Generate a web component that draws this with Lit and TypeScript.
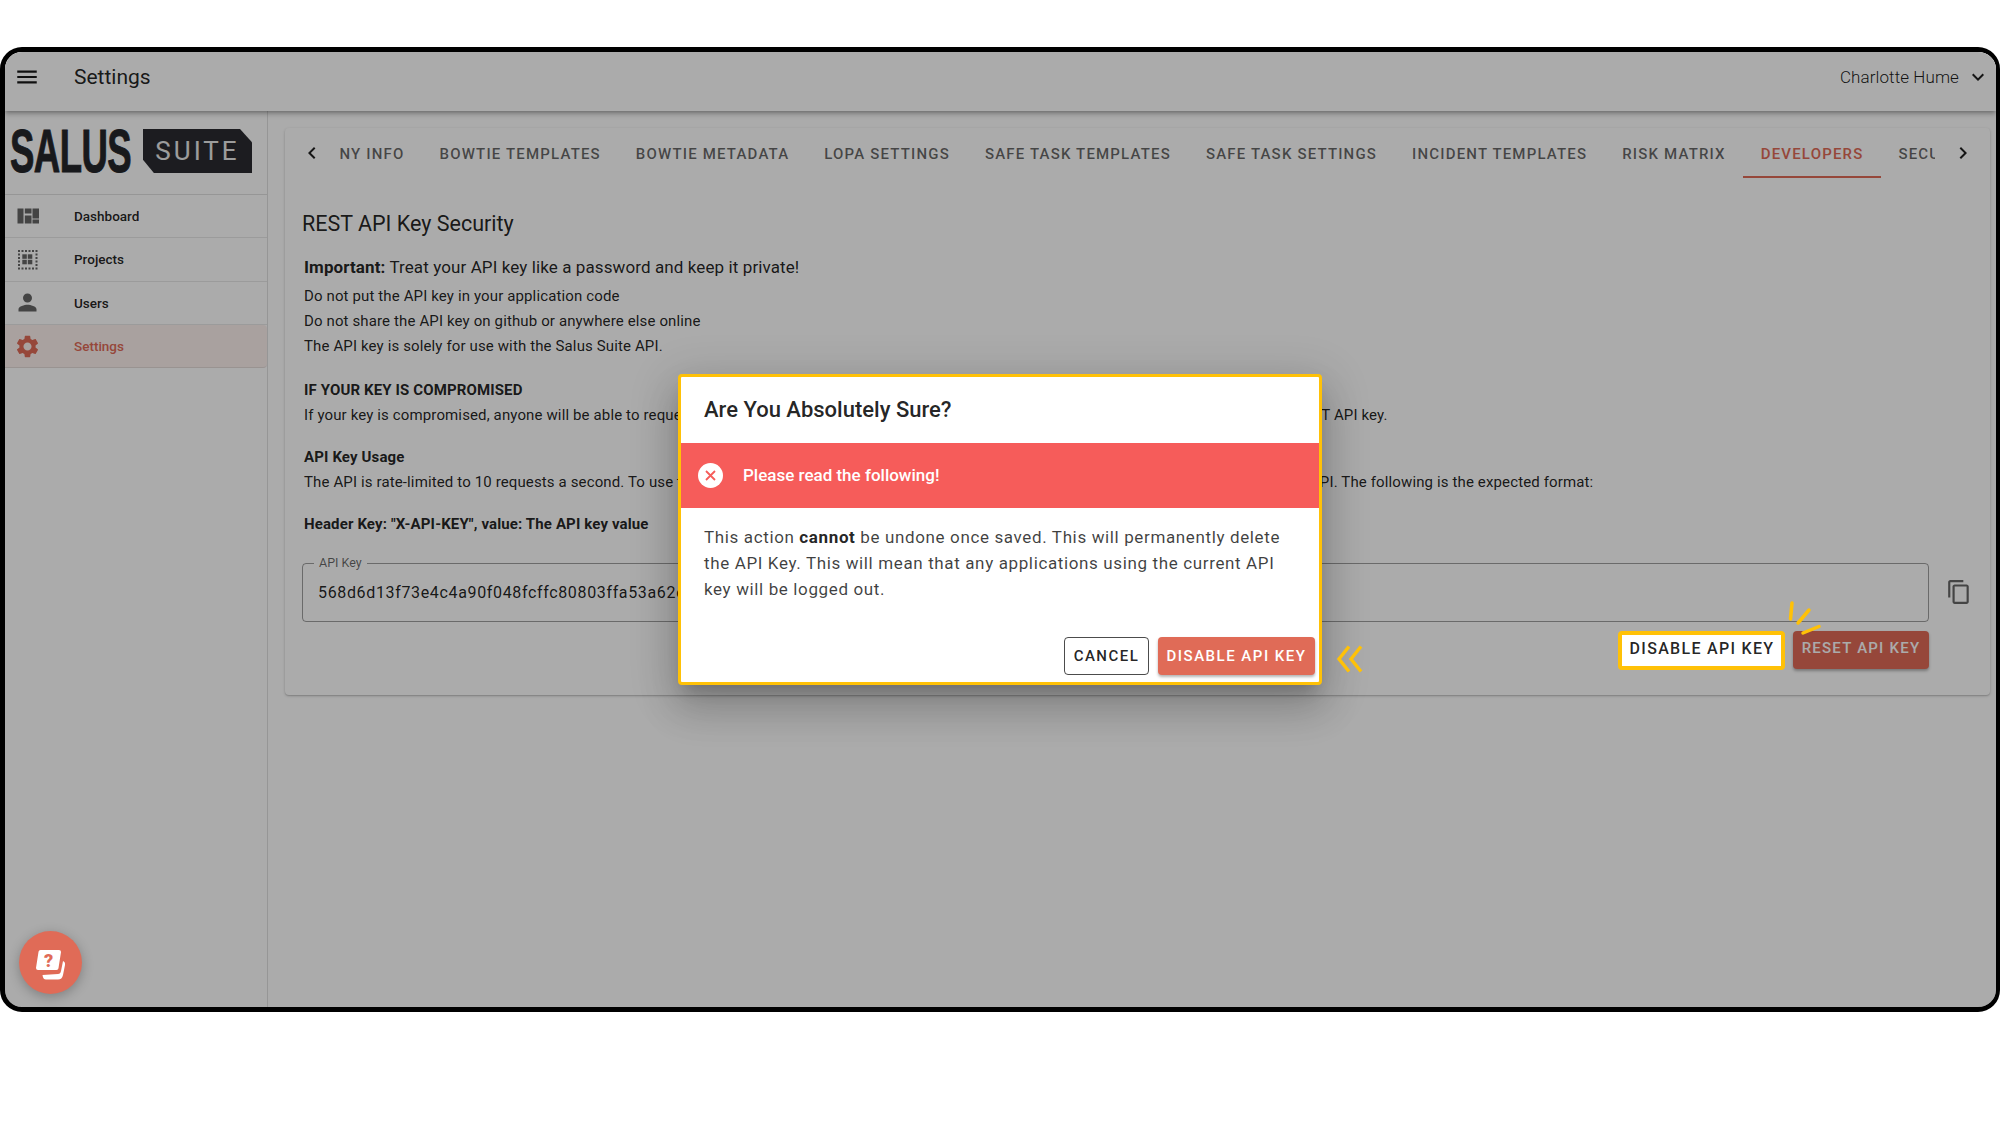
import { LitElement, html, css, svg } from "lit";
import { customElement } from "lit/decorators.js";

const P = {
  menu: "M3 18h18v-2H3v2zm0-5h18v-2H3v2zm0-7v2h18V6H3z",
  person: "M12 12c2.21 0 4-1.79 4-4s-1.79-4-4-4-4 1.79-4 4 1.79 4 4 4zm0 2c-2.67 0-8 1.34-8 4v2h16v-2c0-2.66-5.33-4-8-4z",
  gear: "M19.14 12.94c.04-.3.06-.61.06-.94 0-.32-.02-.64-.07-.94l2.03-1.58c.18-.14.23-.41.12-.61l-1.92-3.32c-.12-.22-.37-.29-.59-.22l-2.39.96c-.5-.38-1.03-.7-1.62-.94l-.36-2.54c-.04-.24-.24-.41-.48-.41h-3.84c-.24 0-.43.17-.47.41l-.36 2.54c-.59.24-1.13.57-1.62.94l-2.39-.96c-.22-.08-.47 0-.59.22L2.74 8.87c-.12.21-.08.47.12.61l2.03 1.58c-.05.3-.09.63-.09.94s.02.64.07.94l-2.03 1.58c-.18.14-.23.41-.12.61l1.92 3.32c.12.22.37.29.59.22l2.39-.96c.5.38 1.03.7 1.62.94l.36 2.54c.05.24.24.41.48.41h3.84c.24 0 .44-.17.47-.41l.36-2.54c.59-.24 1.13-.56 1.62-.94l2.39.96c.22.08.47 0 .59-.22l1.92-3.32c.12-.22.07-.47-.12-.61l-2.01-1.58zM12 15.6c-1.98 0-3.6-1.62-3.6-3.6s1.62-3.6 3.6-3.6 3.6 1.62 3.6 3.6-1.62 3.6-3.6 3.6z",
  copy: "M16 1H4c-1.1 0-2 .9-2 2v14h2V3h12V1zm3 4H8c-1.1 0-2 .9-2 2v14c0 1.1.9 2 2 2h11c1.1 0 2-.9 2-2V7c0-1.1-.9-2-2-2zm0 16H8V7h11v14z",
  left: "M15.41 7.41L14 6l-6 6 6 6 1.41-1.41L10.83 12z",
  right: "M10 6L8.59 7.41 13.17 12l-4.58 4.59L10 18l6-6z",
  down: "M16.59 8.59L12 13.17 7.41 8.59 6 10l6 6 6-6z",
};

const icon = (d: string, size: number, cls = "") =>
  html`<svg class=${cls} width=${size} height=${size} viewBox="0 0 24 24" fill="currentColor"><path d=${d}></path></svg>`;

const quiltIcon = () => html`<svg width="27" height="27" viewBox="0 0 27 27" fill="currentColor">
  <rect x="3.500" y="5.500" width="6" height="15"></rect>
  <rect x="10.800" y="5.500" width="6.700" height="5"></rect>
  <rect x="10.800" y="12.500" width="6.700" height="8"></rect>
  <rect x="18.500" y="5.500" width="6.500" height="10"></rect>
  <rect x="18.500" y="16.500" width="6.500" height="4"></rect>
</svg>`;

const gridIcon = () => {
  const cells: unknown[] = [];
  for (let y = 0; y < 6; y++) {
    for (let x = 0; x < 6; x++) {
      if (x === 0 || x === 5 || y === 0 || y === 5) {
        cells.push(svg`<rect x=${4 + x * 3.5} y=${4 + y * 3.5} width="2" height="2"></rect>`);
      }
    }
  }
  for (let y = 0; y < 2; y++) {
    for (let x = 0; x < 2; x++) {
      cells.push(svg`<rect x=${8.300 + x * 5.500} y=${8.300 + y * 5.500} width="4.500" height="4.500"></rect>`);
    }
  }
  return html`<svg width="27" height="27" viewBox="0 0 27 27" fill="currentColor">${cells}</svg>`;
};

const NAV = [
  { label: "Dashboard", icon: quiltIcon },
  { label: "Projects", icon: gridIcon },
  { label: "Users", icon: () => icon(P.person, 27) },
  { label: "Settings", icon: () => icon(P.gear, 27), active: true },
];

const TABS = [
  "COMPANY INFO", "BOWTIE TEMPLATES", "BOWTIE METADATA", "LOPA SETTINGS", "SAFE TASK TEMPLATES",
  "SAFE TASK SETTINGS", "INCIDENT TEMPLATES", "RISK MATRIX", "DEVELOPERS", "SECURITY",
];

@customElement("app-root")
export class AppRoot extends LitElement {
  static styles = css`
    :host { display: block; height: 1125px; padding-top: 47px; box-sizing: border-box; background: #fff;
      font-family: Roboto, "Liberation Sans", sans-serif; color: rgba(0,0,0,.87); }
    .frame { position: relative; isolation: isolate; height: 965px; box-sizing: border-box; border: 5px solid #000;
      border-right-width: 4px; border-radius: 22px; overflow: hidden; display: flex; flex-direction: column; background: #fff; }
    .scrim { position: absolute; inset: 0; background: rgba(0,0,0,.33); z-index: 10; }
    header { height: 59px; flex: none; display: flex; align-items: center; padding: 0 6px 9px 9px; box-sizing: border-box;
      box-shadow: 0 2px 4px -1px rgba(0,0,0,.3), 0 4px 5px rgba(0,0,0,.14); position: relative; background: #fff; }
    header .burger { color: rgba(0,0,0,.9); margin-right: 34px; }
    header h1 { margin: 0; font-size: 21px; font-weight: 400; flex: 1; color: rgba(0,0,0,.87); }
    .user { font-size: 17px; font-weight: 300; margin-right: 7px; color: rgba(0,0,0,.9); letter-spacing: .1px; }
    .body { flex: 1; display: flex; min-height: 0; }
    aside { width: 263px; flex: none; box-sizing: border-box; border-right: 1px solid rgba(0,0,0,.12); }
    .logo { height: 84px; box-sizing: border-box; padding: 17px 0 0 5px; display: flex; align-items: flex-start; gap: 14px; border-bottom: 1px solid rgba(0,0,0,.12); }
    .salus { font-family: "Liberation Sans", sans-serif; font-weight: 700; font-size: 62px; line-height: 45px; color: #25262b; -webkit-text-stroke: 1px #25262b;
      letter-spacing: -1px; width: 119px; display: block; transform: scaleX(.59); transform-origin: left center; white-space: nowrap; }
    .suite { margin-top: 1px; width: 109px; height: 44px; background: #2a2b30; color: #e9e9e9; font-size: 26px; font-weight: 400; letter-spacing: 3px;
      display: flex; align-items: center; justify-content: center; clip-path: polygon(0 0, 89% 0, 100% 30%, 100% 100%, 10% 100%, 0 70%); }
    .nav { display: flex; align-items: center; height: 43.300px; box-sizing: border-box; border-bottom: 1px solid rgba(0,0,0,.09); padding-left: 9px; font-size: 13.500px; font-weight: 500; }
    .nav .ic { width: 60px; display: flex; color: rgba(0,0,0,.6); }
    .nav.active { background: rgba(224,107,87,.1); color: #e06b57; border-radius: 0 4px 4px 0; }
    .nav.active .ic { color: #e06b57; }
    main { flex: 1; min-width: 0; padding: 17px 6px 0 17px; }
    .card { box-shadow: 0 1px 3px rgba(0,0,0,.2), 0 1px 1px rgba(0,0,0,.1); border-radius: 4px; padding-bottom: 25px; background: #fff; }
    .tabs { display: flex; align-items: stretch; height: 50px; }
    .arrow { width: 54px; flex: none; display: flex; align-items: center; justify-content: center; color: rgba(0,0,0,.87); }
    .arrow.r { width: 55px; }
    .track { flex: 1; min-width: 0; overflow: hidden; }
    .strip { display: flex; height: 100%; margin-left: -74.500px; }
    .tab { flex: none; padding: 3px 17.500px 0; font-size: 15px; font-weight: 500; letter-spacing: 1.170px; color: rgba(0,0,0,.6); display: flex; align-items: center; white-space: nowrap; box-sizing: border-box; border-bottom: 2px solid transparent; }
    .tab.active { color: #e06b57; border-bottom-color: #e06b57; }
    .content { padding: 32px 0 0 17px; }
    h2 { margin: 0; font-size: 21.500px; font-weight: 400; line-height: 28px; }
    .copy-text { padding-left: 2px; font-size: 15px; line-height: 25px; letter-spacing: .13px; }
    .imp { font-size: 17px; line-height: 24px; margin: 17px 0 5px; letter-spacing: .1px; }
    b { font-weight: 700; }
    p { margin: 0; }
    .gap { margin-top: 18.600px; }
    .gap2 { margin-top: 17px; }
    .nudge { margin-top: .4px; }
    .strong { font-weight: 700; }
    .row { display: flex; align-items: center; margin-top: 26px; }
    .field { position: relative; flex: none; width: 1627px; height: 59px; box-sizing: border-box; border: 1px solid rgba(0,0,0,.38); border-radius: 4px; padding: 0 15px; display: flex; align-items: center; font-size: 16px; letter-spacing: .65px; }
    .legend { position: absolute; left: 11px; top: -8px; background: #fff; padding: 0 5px; font-size: 12.500px; line-height: 14px; color: rgba(0,0,0,.6); letter-spacing: 0; }
    .copy { margin-left: 17px; color: rgba(0,0,0,.6); display: flex; }
    .actions { display: flex; justify-content: flex-end; gap: 8px; width: 1627px; margin-top: 9px; }
    .btn { height: 38px; box-sizing: border-box; display: flex; align-items: center; justify-content: center; font-size: 15px; font-weight: 500; letter-spacing: 1.500px; border-radius: 4px; white-space: nowrap; }
    .btn.red { background: #e06b57; color: #fff; box-shadow: 0 2px 3px rgba(0,0,0,.3); }
    .hl { position: relative; z-index: 20; background: #fff; color: rgba(0,0,0,.87); width: 167px; height: 39px; border: 4px solid #ffc107; font-size: 16px; letter-spacing: 1.300px; padding: 0 0 3px 1px; }
    .reset { width: 136px; letter-spacing: 1.230px; padding-bottom: 3px; }
    .dialog { position: absolute; z-index: 20; left: 673px; top: 322px; width: 644px; height: 311px; box-sizing: border-box; border: 3px solid #ffc107; border-radius: 4px; background: #fff; box-shadow: 0 11px 15px -7px rgba(0,0,0,.2), 0 24px 38px 3px rgba(0,0,0,.14), 0 9px 46px 8px rgba(0,0,0,.12); display: flex; flex-direction: column; }
    .dialog h3 { margin: 0; height: 66px; box-sizing: border-box; padding: 0 23px 2px; display: flex; align-items: center; font-size: 22px; font-weight: 500; }
    .alert { height: 65px; box-sizing: border-box; flex: none; background: #f65c5a; color: #fff; display: flex; align-items: center; padding: 0 0 0 17px; gap: 20px; font-size: 17px; font-weight: 500; }
    .alert span { position: relative; top: -1px; }
    .dtext { padding: 16px 23px 0; font-size: 17px; line-height: 26px; letter-spacing: .63px; color: rgba(0,0,0,.75); flex: 1; }
    .dtext b { color: rgba(0,0,0,.87); font-weight: 700; }
    .dactions { display: flex; justify-content: flex-end; gap: 9px; padding: 0 4px 7px 0; }
    .cancel { width: 85px; border: 1px solid rgba(0,0,0,.7); }
    .dis { width: 157px; }
    .overlay-mark { position: absolute; z-index: 20; pointer-events: none; }
    .chev { left: 1331px; top: 593px; }
    .rays { left: 1782px; top: 548px; }
    .help { position: absolute; z-index: 20; left: 14px; top: 879px; width: 63px; height: 63px; border-radius: 50%; background: #e06b57; box-shadow: 0 3px 12px rgba(0,0,0,.25); display: flex; align-items: center; justify-content: center; }
    .help-q { font-size: 18px; font-weight: 900; fill: #e06b57; font-family: Roboto, sans-serif; text-anchor: middle; }
  `;

  render() {
    return html`<div class="frame">
      <header>
        ${icon(P.menu, 26, "burger")}
        <h1>Settings</h1>
        <span class="user">Charlotte Hume</span>
        ${icon(P.down, 24)}
      </header>
      <div class="body">
        <aside>
          <div class="logo"><span class="salus">SALUS</span><span class="suite">SUITE</span></div>
          ${NAV.map((n) => html`<div class="nav ${n.active ? "active" : ""}"><span class="ic">${n.icon()}</span>${n.label}</div>`)}
        </aside>
        <main>
          <div class="card">
            <div class="tabs">
              <div class="arrow">${icon(P.left, 24)}</div>
              <div class="track"><div class="strip">
                ${TABS.map((t) => html`<div class="tab ${t === "DEVELOPERS" ? "active" : ""}">${t}</div>`)}
              </div></div>
              <div class="arrow r">${icon(P.right, 24)}</div>
            </div>
            <div class="content">
              <h2>REST API Key Security</h2>
              <div class="copy-text">
                <p class="imp"><b>Important:</b> Treat your API key like a password and keep it private!</p>
                <p>Do not put the API key in your application code</p>
                <p>Do not share the API key on github or anywhere else online</p>
                <p>The API key is solely for use with the Salus Suite API.</p>
                <p class="strong gap">IF YOUR KEY IS COMPROMISED</p>
                <p>If your key is compromised, anyone will be able to request data on your behalf. If this happens, you should disable it immediately and create a new REST API key.</p>
                <p class="strong gap2">API Key Usage</p>
                <p class="nudge">The API is rate-limited to 10 requests a second. To use the API, you must always include the current API key as a header in all of your requests to the API. The following is the expected format:</p>
                <p class="strong gap2">Header Key: "X-API-KEY", value: The API key value</p>
              </div>
              <div class="row">
                <div class="field"><span class="legend">API Key</span>568d6d13f73e4c4a90f048fcffc80803ffa53a62e</div>
                <span class="copy">${icon(P.copy, 26)}</span>
              </div>
              <div class="actions">
                <div class="btn hl">DISABLE API KEY</div>
                <div class="btn red reset">RESET API KEY</div>
              </div>
            </div>
          </div>
        </main>
      </div>
      <div class="scrim"></div>
      <div class="dialog">
        <h3>Are You Absolutely Sure?</h3>
        <div class="alert">
          <svg width="25" height="25" viewBox="0 0 25 25"><circle cx="12.500" cy="12.500" r="12.500" fill="#fff"></circle><path d="M8 8l9 9M17 8l-9 9" stroke="#f65c5a" stroke-width="1.800" fill="none"></path></svg>
          <span>Please read the following!</span>
        </div>
        <div class="dtext">This action <b>cannot</b> be undone once saved. This will permanently delete the API Key. This will mean that any applications using the current API key will be logged out.</div>
        <div class="dactions">
          <div class="btn cancel">CANCEL</div>
          <div class="btn red dis">DISABLE API KEY</div>
        </div>
      </div>
      <svg class="overlay-mark chev" width="28" height="28" viewBox="0 0 28 28" fill="none" stroke="#ffc107" stroke-width="3.400">
        <path d="M13 1.500L3 14l10 12.500M25 1.500L15 14l10 12.500"></path>
      </svg>
      <svg class="overlay-mark rays" width="42" height="38" viewBox="0 0 42 38" fill="none" stroke="#ffc107" stroke-width="3.500" stroke-linecap="round">
        <path d="M5 3L3.500 19M22 10L11 23M32 26.500L16 33"></path>
      </svg>
      <div class="help">
        <svg width="36" height="36" viewBox="0 0 36 36">
          <path d="M30 16Q32.500 17 32 20L30 30Q29 34.500 25 34.500L13 34.500Q10 34.500 9.500 30L25 29Q27.500 29 28 26Z" fill="#fff"></path>
          <path d="M7.500 7L26 7L23.500 23L5 23Z" fill="#fff" stroke="#fff" stroke-width="4" stroke-linejoin="round"></path>
          <text class="help-q" x="15.500" y="21.500">?</text>
        </svg>
      </div>
    </div>`;
  }
}
